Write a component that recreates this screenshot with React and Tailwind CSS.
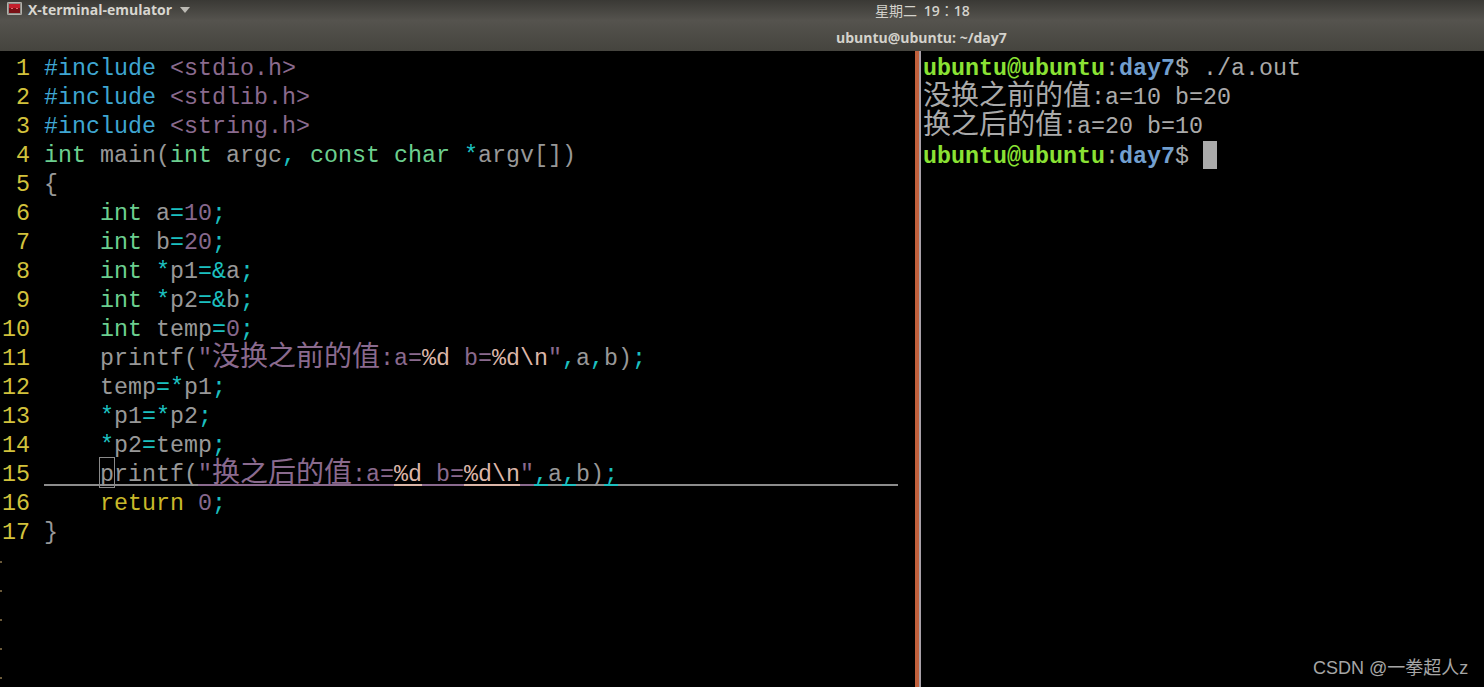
const CJK = '"Noto Sans CJK SC", sans-serif';
const C = {
  inc: "text-[#3fa6d2]",
  str: "text-[#8a6a8e]",
  typ: "text-[#6ccf8f]",
  txt: "text-[#989898]",
  cya: "text-[#1cc0c0]",
  num: "text-[#86688c]",
  esc: "text-[#dcb6a8]",
  ret: "text-[#c9b92a]",
};

function Z({ children, c }) {
  return <span className={`relative top-[1px] text-[28px] leading-[0] ${c}`} style={{ fontFamily: CJK }}>{children}</span>;
}

const code = [
  [[C.inc, "#include"], [C.txt, " "], [C.str, "<stdio.h>"]],
  [[C.inc, "#include"], [C.txt, " "], [C.str, "<stdlib.h>"]],
  [[C.inc, "#include"], [C.txt, " "], [C.str, "<string.h>"]],
  [[C.typ, "int"], [C.txt, " main("], [C.typ, "int"], [C.txt, " argc"], [C.cya, ","], [C.txt, " "], [C.typ, "const"], [C.txt, " "], [C.typ, "char"], [C.txt, " "], [C.cya, "*"], [C.txt, "argv[])"]],
  [[C.txt, "{"]],
  [[C.txt, "    "], [C.typ, "int"], [C.txt, " a"], [C.cya, "="], [C.num, "10"], [C.cya, ";"]],
  [[C.txt, "    "], [C.typ, "int"], [C.txt, " b"], [C.cya, "="], [C.num, "20"], [C.cya, ";"]],
  [[C.txt, "    "], [C.typ, "int"], [C.txt, " "], [C.cya, "*"], [C.txt, "p1"], [C.cya, "=&"], [C.txt, "a"], [C.cya, ";"]],
  [[C.txt, "    "], [C.typ, "int"], [C.txt, " "], [C.cya, "*"], [C.txt, "p2"], [C.cya, "=&"], [C.txt, "b"], [C.cya, ";"]],
  [[C.txt, "    "], [C.typ, "int"], [C.txt, " temp"], [C.cya, "="], [C.num, "0"], [C.cya, ";"]],
  [[C.txt, "    printf("], [C.str, '"'], ["z", "没换之前的值"], [C.str, ":a="], [C.esc, "%d"], [C.str, " b="], [C.esc, "%d\\n"], [C.str, '"'], [C.cya, ","], [C.txt, "a"], [C.cya, ","], [C.txt, "b)"], [C.cya, ";"]],
  [[C.txt, "    temp"], [C.cya, "=*"], [C.txt, "p1"], [C.cya, ";"]],
  [[C.txt, "    "], [C.cya, "*"], [C.txt, "p1"], [C.cya, "=*"], [C.txt, "p2"], [C.cya, ";"]],
  [[C.txt, "    "], [C.cya, "*"], [C.txt, "p2"], [C.cya, "="], [C.txt, "temp"], [C.cya, ";"]],
  [[C.txt, "    printf("], [C.str, '"'], ["z", "换之后的值"], [C.str, ":a="], [C.esc, "%d"], [C.str, " b="], [C.esc, "%d\\n"], [C.str, '"'], [C.cya, ","], [C.txt, "a"], [C.cya, ","], [C.txt, "b)"], [C.cya, ";"]],
  [[C.txt, "    "], [C.ret, "return"], [C.txt, " "], [C.num, "0"], [C.cya, ";"]],
  [[C.txt, "}"]],
];

const rowCls = "h-[29px] leading-[31px] whitespace-pre";

function Row({ n, children }) {
  return (
    <div className={`flex ${rowCls}`}>
      <span className="w-[30px] shrink-0 text-right text-[#d2c23c]">{n}</span>
      <span className="w-[14px] shrink-0" />
      <div className="flex-1 min-w-0 relative">{children}</div>
    </div>
  );
}

function CursorOverlay() {
  return (
    <>
      <div className="absolute left-0 top-[24px] flex h-[2px] w-[854px]">
        <span className="w-[154px] bg-[#8c8c8c]" />
        <span className="w-[14px] bg-[#8a6a8e]" />
        <span className="w-[140px] bg-[#8a6a8e]" />
        <span className="w-[42px] bg-[#8a6a8e]" />
        <span className="w-[28px] bg-[#dcb6a8]" />
        <span className="w-[42px] bg-[#8a6a8e]" />
        <span className="w-[56px] bg-[#dcb6a8]" />
        <span className="w-[14px] bg-[#8a6a8e]" />
        <span className="w-[14px] bg-[#1cc0c0]" />
        <span className="w-[14px] bg-[#8c8c8c]" />
        <span className="w-[14px] bg-[#1cc0c0]" />
        <span className="w-[28px] bg-[#8c8c8c]" />
        <span className="w-[14px] bg-[#1cc0c0]" />
        <span className="flex-1 bg-[#8c8c8c]" />
      </div>
      <span className="absolute left-[55px] top-[-3px] w-[16px] h-[31px] border border-[#8a8a8a]" />
    </>
  );
}

function Prompt({ children }) {
  return (
    <div className={rowCls}>
      <span className="font-bold text-[#8ae234]">ubuntu@ubuntu</span>
      <span className="text-[#aaaaaa]">:</span>
      <span className="font-bold text-[#729fcf]">day7</span>
      <span className="text-[#aaaaaa]">$ </span>
      {children}
    </div>
  );
}

function Tilde() {
  return (
    <div className="h-[29px] flex items-center">
      <span className="w-[2px] h-[2px] bg-[#6b5a3a]" />
    </div>
  );
}

export default function App() {
  return (
    <div className="w-[1484px] h-[687px] overflow-hidden bg-black flex flex-col" style={{ fontFamily: '"Liberation Mono", monospace' }}>
      <div className="h-[51px] shrink-0 bg-gradient-to-b from-[#3a3935] via-[#55534e] via-40% to-[#45443e] flex flex-col" style={{ fontFamily: '"Open Sans", "Noto Sans CJK SC", sans-serif' }}>
        <div className="h-[23px] flex items-center relative">
          <svg className="absolute left-[7px] top-[2px]" width="15" height="13" viewBox="0 0 15 13">
            <rect x="0" y="0" width="15" height="13" rx="1" fill="#8f8d88" />
            <rect x="0.5" y="0.5" width="14" height="12" rx="1" fill="none" stroke="#b4b2ac" />
            <rect x="2" y="2" width="11" height="9" fill="#7a1015" />
            <rect x="2" y="2" width="11" height="4" fill="#c4202c" />
            <rect x="4" y="6" width="2" height="1" fill="#e06a70" />
            <rect x="9" y="6" width="2" height="1" fill="#e06a70" />
          </svg>
          <span className="absolute left-[28px] top-[1px] text-[14px] leading-[18px] font-bold text-[#d8d6d0]">X-terminal-emulator</span>
          <svg className="absolute left-[180px] top-[7px]" width="10" height="6" viewBox="0 0 10 6">
            <path d="M0 0H10L5 6Z" fill="#bcbab4" />
          </svg>
          <span className="absolute left-[875px] top-[1px] text-[14px] leading-[18px] text-[#d4d2cc] whitespace-pre">
            星期二 <b className="font-semibold ml-[3px]">19</b>
            <span style={{ fontFamily: '"Noto Sans CJK TC", sans-serif' }}>：</span>
            <b className="font-semibold">18</b>
          </span>
        </div>
        <div className="flex-1 flex items-center pl-[836px]">
          <span className="text-[14px] font-bold text-[#d4d2cc]">ubuntu@ubuntu: ~/day7</span>
        </div>
      </div>

      <div className="flex-1 flex min-h-0 text-[23.33px]">
        <div className="w-[915px] shrink-0 pt-[3px]">
          {code.map((line, i) => (
            <Row key={i} n={i + 1}>
              {i === 14 && <CursorOverlay />}
              <span className="relative">
                {line.map(([c, t], j) =>
                  c === "z" ? <Z key={j} c={C.str}>{t}</Z> : <span key={j} className={c}>{t}</span>
                )}
              </span>
            </Row>
          ))}
          <Tilde /><Tilde /><Tilde /><Tilde /><Tilde />
        </div>

        <div className="w-[4px] shrink-0 bg-[#c0603c]" />
        <div className="w-[2px] shrink-0 bg-[#a8a0a8]" />

        <div className="flex-1 min-w-0 pt-[3px] pl-[2px] relative text-[#aaaaaa]">
          <Prompt><span>./a.out</span></Prompt>
          <div className={rowCls}><Z c="">没换之前的值</Z>:a=10 b=20</div>
          <div className={rowCls}><Z c="">换之后的值</Z>:a=20 b=10</div>
          <Prompt><span className="inline-block w-[14px] h-[28px] bg-[#aaaaaa] align-[-6px]" /></Prompt>
          <span className="absolute left-[392px] top-[605px] text-[18px] leading-[24px] text-[#a6a6a6] whitespace-pre" style={{ fontFamily: '"Liberation Sans", "Noto Sans CJK SC", sans-serif' }}>CSDN @一拳超人z</span>
        </div>
      </div>
    </div>
  );
}
